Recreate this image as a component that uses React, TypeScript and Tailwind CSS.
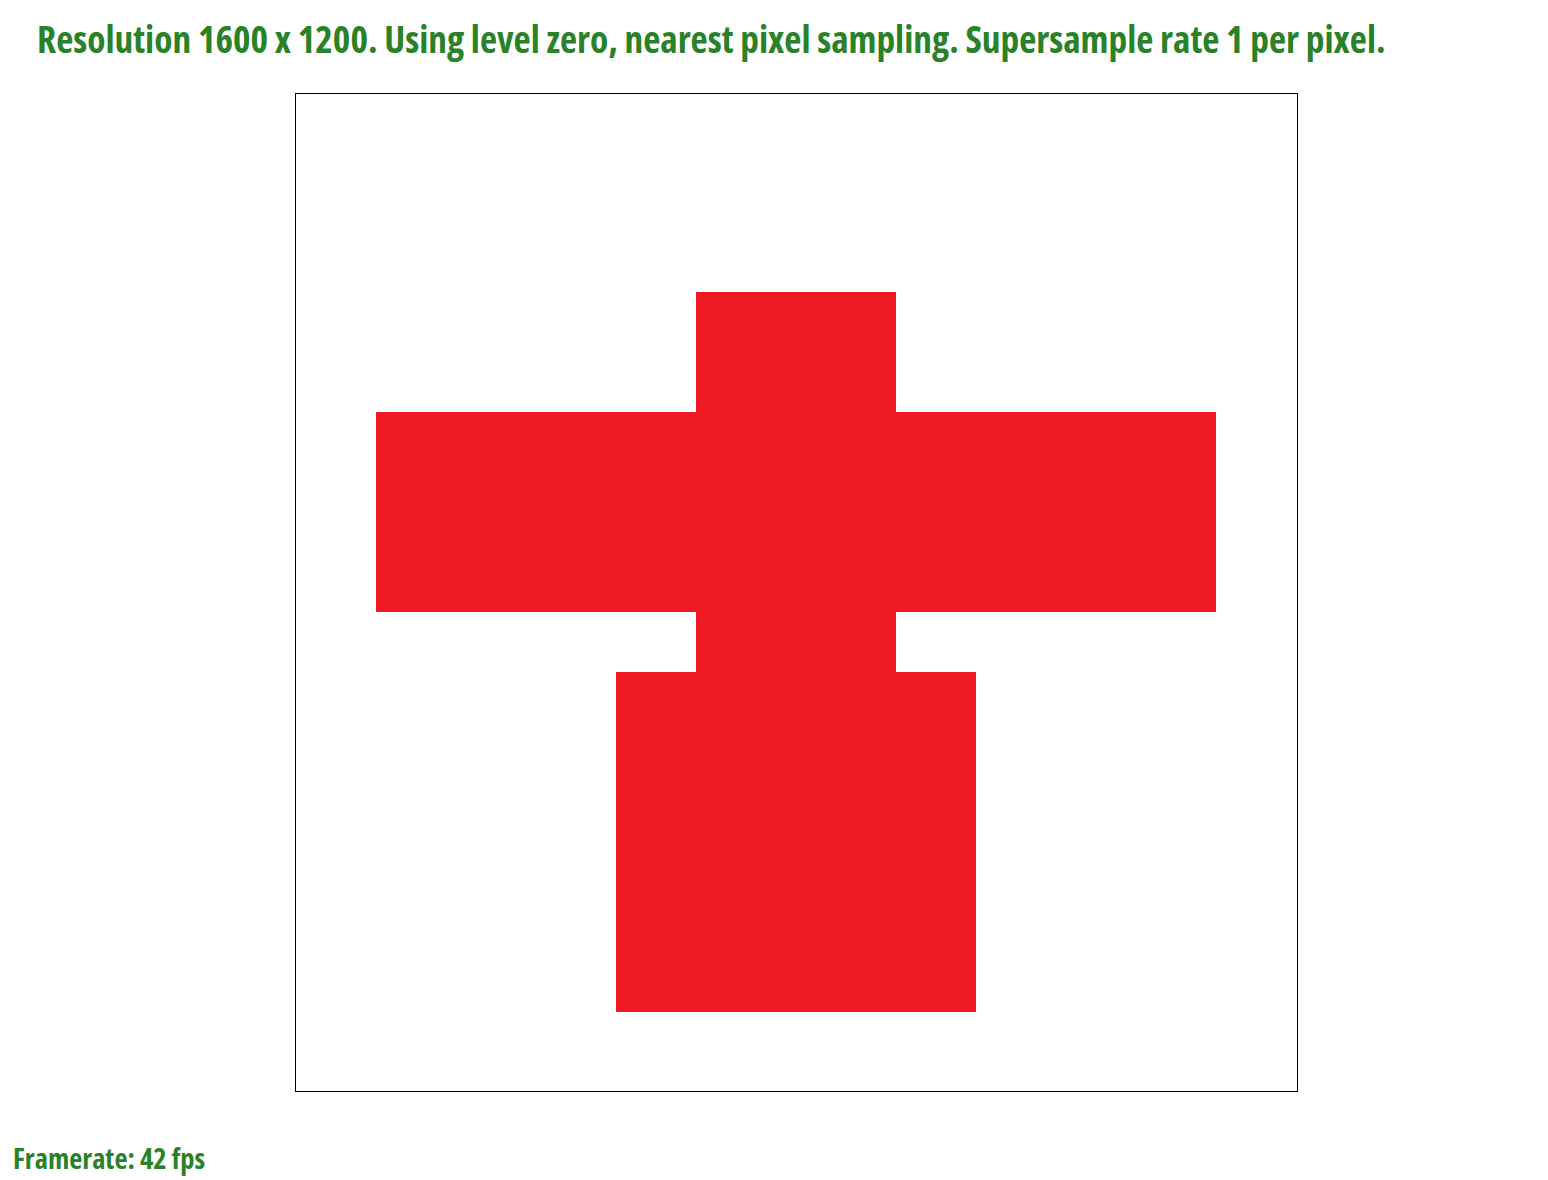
const font = { fontFamily: '"Open Sans", "DejaVu Sans Condensed", sans-serif' };

export default function App() {
  return (
    <div className="w-[1548px] h-[1180px] bg-white flex flex-col" style={font}>
      <h1 className="pl-[37px] pt-[13px] h-[93px] text-[37.4px] leading-[52px] font-bold font-stretch-condensed text-[#2a8228] whitespace-nowrap">
        Resolution 1600 x 1200. Using level zero, nearest pixel sampling. Supersample rate 1 per pixel.
      </h1>

      {/* render target */}
      <div className="ml-[295px] w-[1003px] h-[999px] border border-black">
        <svg width="1001" height="997" viewBox="0 0 1001 997" shapeRendering="crispEdges">
          <rect x="400" y="198" width="200" height="120" fill="#ee1923" />
          <rect x="80" y="318" width="840" height="200" fill="#ee1923" />
          <rect x="400" y="518" width="200" height="60" fill="#ee1923" />
          <rect x="320" y="578" width="360" height="340" fill="#ee1923" />
        </svg>
      </div>

      <p className="pl-[13px] pt-[48px] text-[28.5px] leading-[36px] font-bold font-stretch-condensed text-[#2a8228]">
        Framerate: 42 fps
      </p>
    </div>
  );
}
